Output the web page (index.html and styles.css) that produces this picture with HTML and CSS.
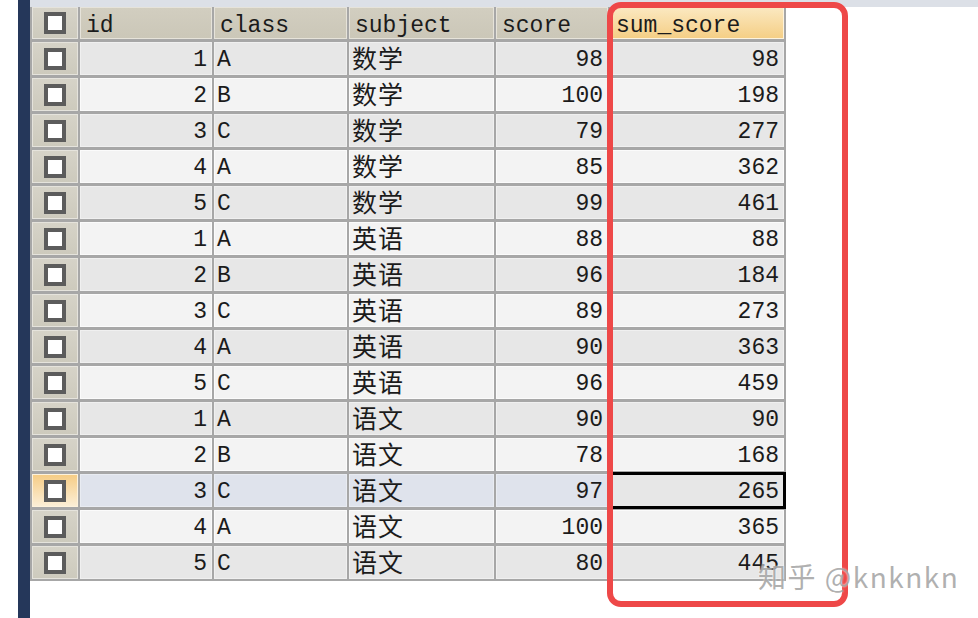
FILE: index.html
```html
<!DOCTYPE html>
<html>
<head>
<meta charset="utf-8">
<link rel="stylesheet" href="styles.css">
</head>
<body>
<div class="page">
  <div class="gutter"></div>
  <div class="navbar"></div>
  <div class="main">
    <div class="strip"></div>
    <div class="grid">
      <div class="c chk head"><span class="box"></span></div>
      <div class="c head">id</div>
      <div class="c head">class</div>
      <div class="c head">subject</div>
      <div class="c head">score</div>
      <div class="c head sorted">sum_score</div>

      <div class="c chk"><span class="box"></span></div><div class="c num odd">1</div><div class="c odd">A</div><div class="c odd zh">数学</div><div class="c num odd">98</div><div class="c num odd">98</div>
      <div class="c chk"><span class="box"></span></div><div class="c num">2</div><div class="c">B</div><div class="c zh">数学</div><div class="c num">100</div><div class="c num">198</div>
      <div class="c chk"><span class="box"></span></div><div class="c num odd">3</div><div class="c odd">C</div><div class="c odd zh">数学</div><div class="c num odd">79</div><div class="c num odd">277</div>
      <div class="c chk"><span class="box"></span></div><div class="c num">4</div><div class="c">A</div><div class="c zh">数学</div><div class="c num">85</div><div class="c num">362</div>
      <div class="c chk"><span class="box"></span></div><div class="c num odd">5</div><div class="c odd">C</div><div class="c odd zh">数学</div><div class="c num odd">99</div><div class="c num odd">461</div>
      <div class="c chk"><span class="box"></span></div><div class="c num">1</div><div class="c">A</div><div class="c zh">英语</div><div class="c num">88</div><div class="c num">88</div>
      <div class="c chk"><span class="box"></span></div><div class="c num odd">2</div><div class="c odd">B</div><div class="c odd zh">英语</div><div class="c num odd">96</div><div class="c num odd">184</div>
      <div class="c chk"><span class="box"></span></div><div class="c num">3</div><div class="c">C</div><div class="c zh">英语</div><div class="c num">89</div><div class="c num">273</div>
      <div class="c chk"><span class="box"></span></div><div class="c num odd">4</div><div class="c odd">A</div><div class="c odd zh">英语</div><div class="c num odd">90</div><div class="c num odd">363</div>
      <div class="c chk"><span class="box"></span></div><div class="c num">5</div><div class="c">C</div><div class="c zh">英语</div><div class="c num">96</div><div class="c num">459</div>
      <div class="c chk"><span class="box"></span></div><div class="c num odd">1</div><div class="c odd">A</div><div class="c odd zh">语文</div><div class="c num odd">90</div><div class="c num odd">90</div>
      <div class="c chk"><span class="box"></span></div><div class="c num">2</div><div class="c">B</div><div class="c zh">语文</div><div class="c num">78</div><div class="c num">168</div>
      <div class="c chk cur"><span class="box"></span></div><div class="c num sel">3</div><div class="c sel">C</div><div class="c sel zh">语文</div><div class="c num sel">97</div><div class="c num odd focus">265</div>
      <div class="c chk"><span class="box"></span></div><div class="c num">4</div><div class="c">A</div><div class="c zh">语文</div><div class="c num">100</div><div class="c num">365</div>
      <div class="c chk"><span class="box"></span></div><div class="c num odd">5</div><div class="c odd">C</div><div class="c odd zh">语文</div><div class="c num odd">80</div><div class="c num odd">445</div>
    </div>
  </div>
  <div class="highlight"></div>
  <div class="watermark">知乎 @knknkn</div>
</div>
</body>
</html>
```

FILE: styles.css
```css
html, body {
  margin: 0;
  padding: 0;
  background: #ffffff;
}
.page {
  position: relative;
  display: flex;
  width: 978px;
  height: 618px;
  overflow: hidden;
}
.gutter {
  width: 18px;
  flex: none;
}
.navbar {
  width: 12px;
  flex: none;
  background: #25375a;
}
.main {
  flex: 1;
  display: flex;
  flex-direction: column;
}
.strip {
  height: 7px;
  background: #dce0e7;
}
.grid {
  align-self: flex-start;
  display: grid;
  grid-template-columns: 46px 132px 133px 145px 112px 174px;
  grid-template-rows: 32px repeat(15, 33px);
  column-gap: 2px;
  row-gap: 3px;
  padding: 0 2px 2px 2px;
  background: #a7a7a7;
}
.c {
  box-sizing: border-box;
  display: flex;
  align-items: center;
  padding: 2px 4px 0 2px;
  background: #f3f3f3;
  border: 1px solid #fbfbfb;
  font-family: "Liberation Mono", "Noto Sans CJK SC", monospace;
  font-size: 23px;
  color: #1b1b1b;
  white-space: nowrap;
}
.c.odd {
  background: #e7e7e7;
  border-color: #f0f0f0;
}
.c.num {
  justify-content: flex-end;
}
.c.zh {
  font-family: "Noto Sans CJK SC", sans-serif;
  font-size: 25px;
  padding: 0 0 4px 2px;
  letter-spacing: 1px;
}
.c.head {
  background: linear-gradient(#d2cec0, #cbc7b8);
  border-color: #e6e3da;
  padding: 5px 4px 0 5px;
}
.c.head.sorted {
  background: linear-gradient(#fbe8c0, #f5cf86);
  border-color: #fdf3dd;
}
.c.chk {
  justify-content: center;
  padding: 0;
  background: linear-gradient(#d6d3c8, #cdcabd);
  border-color: #e5e3dc;
}
.c.chk.cur {
  background: linear-gradient(#f6cd86, #fbeed6);
  border-color: #fdf2dc;
}
.c.sel {
  background: #dfe3ec;
  border-color: #e9ecf2;
}
.c.focus {
  outline: 3px solid #000;
  outline-offset: -1px;
}
.box {
  width: 22px;
  height: 22px;
  box-sizing: border-box;
  border: 4px solid #5c5c5c;
  background: #ffffff;
}
.highlight {
  position: absolute;
  left: 607px;
  top: 2px;
  width: 241px;
  height: 605px;
  box-sizing: border-box;
  border: 6px solid #ee4848;
  border-radius: 14px;
}
.watermark {
  position: absolute;
  left: 758px;
  top: 556px;
  font-family: "Noto Sans CJK SC", "Noto Sans", sans-serif;
  font-size: 28px;
  letter-spacing: 1.5px;
  color: rgba(150, 150, 150, 0.75);
  text-shadow: 0 0 2px rgba(255, 255, 255, 0.9);
  white-space: nowrap;
}
```
